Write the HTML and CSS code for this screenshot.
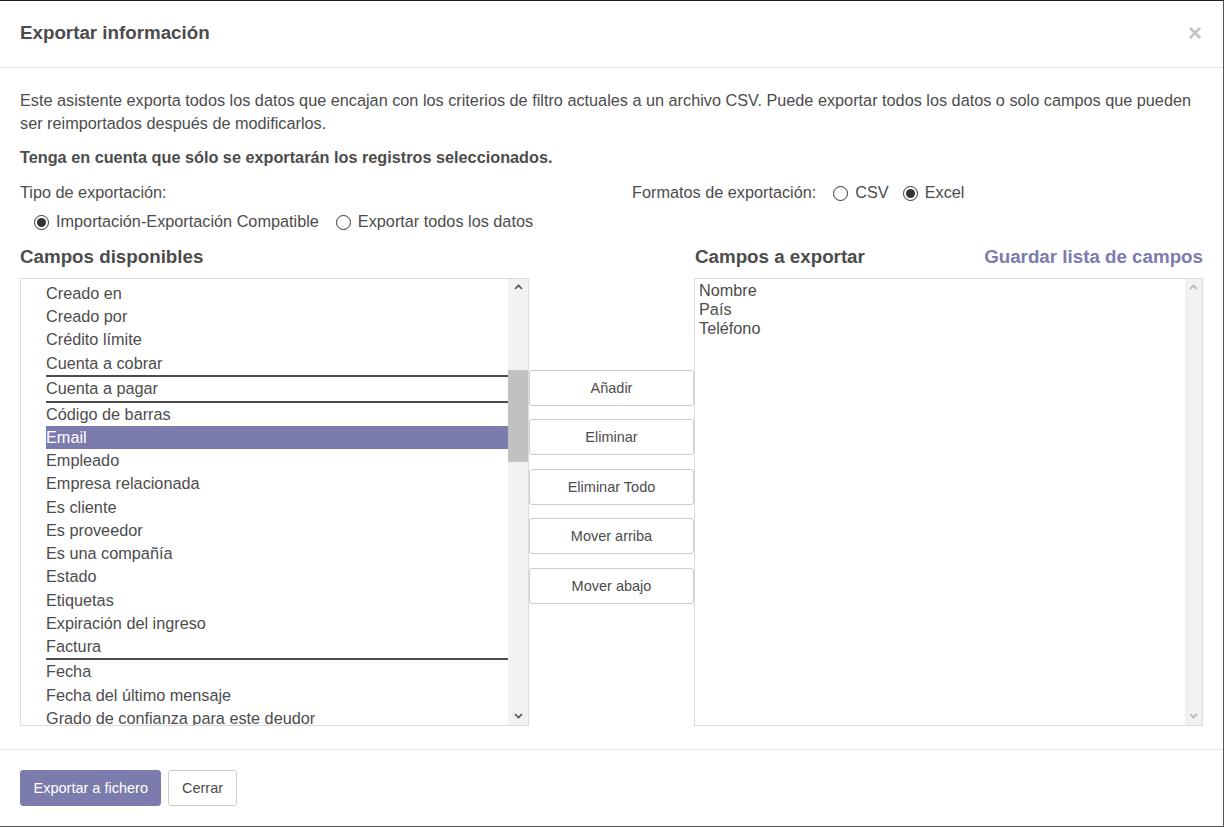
FILE: index.html
```html
<!DOCTYPE html>
<html lang="es">
<head>
<meta charset="utf-8">
<title>Exportar información</title>
<link rel="stylesheet" href="styles.css">
</head>
<body>
<div class="modal">
  <header class="modal-header">
    <h4 class="modal-title">Exportar información</h4>
    <span class="close">×</span>
  </header>
  <main class="modal-body">
    <p class="intro">Este asistente exporta todos los datos que encajan con los criterios de filtro actuales a un archivo CSV. Puede exportar todos los datos o solo campos que pueden ser reimportados después de modificarlos.</p>
    <p class="note">Tenga en cuenta que sólo se exportarán los registros seleccionados.</p>
    <div class="options">
      <div class="opt-left">
        <div class="opt-label">Tipo de exportación:</div>
        <div class="radio-row">
          <label class="radio"><span class="dot checked"></span>Importación-Exportación Compatible</label>
          <label class="radio"><span class="dot"></span>Exportar todos los datos</label>
        </div>
      </div>
      <div class="opt-right">
        <span class="opt-label">Formatos de exportación:</span>
        <label class="radio"><span class="dot"></span>CSV</label>
        <label class="radio"><span class="dot checked"></span>Excel</label>
      </div>
    </div>
    <div class="fields">
      <h4 class="col-title">Campos disponibles</h4>
      <div></div>
      <div class="col-title-right">
        <h4 class="col-title">Campos a exportar</h4>
        <a class="save-link">Guardar lista de campos</a>
      </div>

      <div class="listbox">
        <ul class="tree">
          <li>Creado en</li>
          <li>Creado por</li>
          <li>Crédito límite</li>
          <li class="expand">Cuenta a cobrar</li>
          <li class="expand">Cuenta a pagar</li>
          <li>Código de barras</li>
          <li class="selected">Email</li>
          <li>Empleado</li>
          <li>Empresa relacionada</li>
          <li>Es cliente</li>
          <li>Es proveedor</li>
          <li>Es una compañía</li>
          <li>Estado</li>
          <li>Etiquetas</li>
          <li>Expiración del ingreso</li>
          <li class="expand">Factura</li>
          <li>Fecha</li>
          <li>Fecha del último mensaje</li>
          <li>Grado de confianza para este deudor</li>
        </ul>
        <div class="scrollbar">
          <span class="arrow"><svg width="9" height="6" viewBox="0 0 9 6"><polyline points="1,5 4.5,1.5 8,5" fill="none" stroke="#505050" stroke-width="1.6"/></svg></span>
          <div class="track"><div class="thumb"></div></div>
          <span class="arrow"><svg width="9" height="6" viewBox="0 0 9 6"><polyline points="1,1 4.5,4.5 8,1" fill="none" stroke="#505050" stroke-width="1.6"/></svg></span>
        </div>
      </div>

      <div class="actions">
        <button class="btn">Añadir</button>
        <button class="btn">Eliminar</button>
        <button class="btn">Eliminar Todo</button>
        <button class="btn">Mover arriba</button>
        <button class="btn">Mover abajo</button>
      </div>

      <div class="listbox">
        <ul class="chosen">
          <li>Nombre</li>
          <li>País</li>
          <li>Teléfono</li>
        </ul>
        <div class="scrollbar disabled">
          <span class="arrow"><svg width="9" height="6" viewBox="0 0 9 6"><polyline points="1,5 4.5,1.5 8,5" fill="none" stroke="#b4b4b4" stroke-width="1.6"/></svg></span>
          <div class="track"></div>
          <span class="arrow"><svg width="9" height="6" viewBox="0 0 9 6"><polyline points="1,1 4.5,4.5 8,1" fill="none" stroke="#b4b4b4" stroke-width="1.6"/></svg></span>
        </div>
      </div>
    </div>
  </main>
  <footer class="modal-footer">
    <button class="btn primary">Exportar a fichero</button>
    <button class="btn">Cerrar</button>
  </footer>
</div>
</body>
</html>
```

FILE: styles.css
```css
* { box-sizing: border-box; }

html, body {
  margin: 0;
  padding: 0;
  background: #ffffff;
}

body {
  font-family: "Liberation Sans", Arial, sans-serif;
  font-size: 16.25px;
  line-height: 23.2px;
  color: #4c4c4c;
}

.modal {
  width: 1224px;
  height: 827px;
  display: flex;
  flex-direction: column;
  border-top: 1px solid #1e1e1e;
  border-right: 1px solid #555555;
  border-bottom: 1px solid #555555;
  background: #ffffff;
  overflow: hidden;
}

.modal-header {
  display: flex;
  align-items: center;
  justify-content: space-between;
  padding: 19px 21px 21px 20px;
  border-bottom: 1px solid #e5e5e5;
}

.modal-title {
  margin: 0;
  font-size: 18.75px;
  line-height: 26px;
  font-weight: bold;
  color: #4c4c4c;
}

.close {
  font-size: 24px;
  line-height: 26px;
  font-weight: bold;
  color: #c4c4c4;
}

.modal-body {
  flex: 1;
  padding: 21px 20px 0 20px;
}

.intro {
  margin: 0 0 10.6px 0;
}

.note {
  margin: 0 0 11.8px 0;
  font-weight: bold;
}

.options {
  display: grid;
  grid-template-columns: 612px 1fr;
}

.radio-row {
  margin-top: 5.8px;
  padding-left: 14px;
  display: flex;
  gap: 17px;
}

.radio {
  display: inline-flex;
  align-items: center;
  gap: 7px;
}

.opt-right {
  display: flex;
  align-items: flex-start;
  gap: 14px;
}

.opt-right .opt-label {
  margin-right: 3px;
}

.dot {
  width: 15px;
  height: 15px;
  border: 1.3px solid #333333;
  border-radius: 50%;
  background: #ffffff;
  display: inline-flex;
  align-items: center;
  justify-content: center;
  position: relative;
  top: 0.5px;
}

.dot.checked::after {
  content: "";
  width: 9px;
  height: 9px;
  border-radius: 50%;
  background: #333333;
}

.opt-right .radio {
  height: 23.2px;
}

.fields {
  margin-top: 10.4px;
  display: grid;
  grid-template-columns: 509px 165px 509px;
  grid-template-rows: 26px 448px;
  row-gap: 8px;
}

.col-title {
  margin: 0;
  font-size: 18.75px;
  line-height: 26px;
  font-weight: bold;
  color: #4c4c4c;
}

.col-title-right {
  display: flex;
  justify-content: space-between;
  padding-left: 1px;
}

.save-link {
  font-size: 18.75px;
  line-height: 26px;
  font-weight: bold;
  color: #7c7bad;
  cursor: pointer;
}

.listbox {
  display: flex;
  border: 1px solid #dcdcdc;
  background: #ffffff;
  overflow: hidden;
}

.tree {
  flex: 1;
  list-style: none;
  margin: 0;
  padding: 3.4px 0 0 25px;
  overflow: hidden;
}

.tree li {
  height: 23.25px;
  line-height: 23.25px;
  white-space: nowrap;
}

.tree li.expand {
  height: 25.4px;
  border-bottom: 2px solid #4c4c4c;
}

.tree li.selected {
  background: #7c7bad;
  color: #ffffff;
}

.chosen {
  flex: 1;
  list-style: none;
  margin: 0;
  padding: 2px 4px;
  line-height: 19px;
}

.scrollbar {
  width: 20px;
  display: flex;
  flex-direction: column;
  background: #f1f1f1;
}

.scrollbar.disabled {
  width: 17px;
}

.arrow {
  height: 17px;
  display: flex;
  align-items: center;
  justify-content: center;
}

.track {
  flex: 1;
}

.thumb {
  margin-top: 74px;
  height: 92px;
  background: #c1c1c1;
}

.actions {
  display: flex;
  flex-direction: column;
  gap: 13.5px;
  padding-top: 92px;
}

.btn {
  font-family: "Liberation Sans", Arial, sans-serif;
  font-size: 14.5px;
  height: 36px;
  padding: 0 12.5px;
  border: 1px solid #cccccc;
  border-radius: 3px;
  background: #ffffff;
  color: #4c4c4c;
  cursor: pointer;
}

.actions .btn {
  width: 165px;
}

.modal-footer {
  display: flex;
  gap: 7px;
  padding: 20px;
  border-top: 1px solid #e5e5e5;
}

.btn.primary {
  background: #7c7bad;
  border-color: #7c7bad;
  color: #ffffff;
}
```
